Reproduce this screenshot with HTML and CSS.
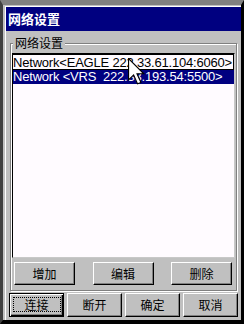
FILE: index.html
```html
<!DOCTYPE html>
<html>
<head>
<meta charset="utf-8">
<link rel="stylesheet" href="styles.css">
</head>
<body>
<div class="win">
  <div class="frame">
    <div class="title">网络设置</div>
    <div class="body">
      <div class="group">
        <div class="legend">网络设置</div>
        <div class="list">
          <div class="item focus">Network&lt;EAGLE 222.33.61.104:6060&gt;</div>
          <div class="item sel">Network &lt;VRS&nbsp; 222.33.193.54:5500&gt;</div>
        </div>
        <div class="row3">
          <div class="btn">增加</div>
          <div class="btn">编辑</div>
          <div class="btn">删除</div>
        </div>
      </div>
      <div class="row4">
        <div class="btn def">连接</div>
        <div class="btn">断开</div>
        <div class="btn">确定</div>
        <div class="btn">取消</div>
      </div>
    </div>
  </div>
  <svg class="cursor" width="18" height="27" viewBox="0 0 16 24">
    <path d="M0.5 0.5 L0.5 19.5 L5 15 L8.5 23 L11.5 21.8 L8 14 L14 14 Z" fill="#fff" stroke="#000" stroke-width="1"/>
  </svg>
</div>
</body>
</html>
```
FILE: styles.css
```css
* { box-sizing: border-box; }
html, body { margin: 0; padding: 0; }
body { width: 244px; height: 324px; overflow: hidden; background: #c0c0c0; }
.win {
  position: relative;
  width: 244px; height: 324px;
  background: #c0c0c0;
  border-top: 5px solid #808080;
  border-left: 3px solid #404040;
  border-right: 3px solid #000;
  border-bottom: 4px solid #000;
  padding: 1px 0 0 2px;
  display: flex; flex-direction: column;
}
.frame {
  flex: 1;
  display: flex; flex-direction: column;
  border-top: 1px solid #fff;
  border-left: 1px solid #fff;
}
.title {
  height: 24px;
  background: #000080;
  color: #fff;
  font: bold 13px/24px "Noto Sans CJK SC", sans-serif;
  padding-left: 2px;
}
.body {
  flex: 1;
  padding: 12px 4px 3px 4px;
  display: flex; flex-direction: column;
}
.group {
  position: relative;
  height: 248px;
  border: 1px solid #808080;
  box-shadow: 1px 1px 0 #fff, inset 1px 1px 0 #fff;
  padding: 9px 1px 5px 1px;
  display: flex; flex-direction: column;
}
.legend {
  position: absolute;
  left: 2px; top: -8px;
  padding: 0 2px;
  background: #c0c0c0;
  font: 12px/14px "Noto Sans CJK SC", sans-serif;
  color: #000;
}
.list {
  height: 205px;
  margin-bottom: 4px;
  background: #fffbff;
  border-top: 1px solid #000;
  border-left: 1px solid #000;
  border-right: 1px solid #c8c8c8;
  border-bottom: 1px solid #c8c8c8;
  font: 13px/14px "Liberation Sans", Arial, sans-serif;
  letter-spacing: -0.2px;
  color: #000;
}
.item { height: 14px; white-space: pre; }
.item.focus {
  height: 16px;
  padding-top: 1px;
  border: 1px solid #000;
  border-left: none;
}
.item.sel { background: #000080; color: #fff; }
.row3 {
  height: 23px;
  width: 218px;
  margin-left: 2px;
  display: flex; justify-content: space-between;
}
.row3 .btn { width: 61px; }
.row4 {
  height: 24px;
  margin: 2px -1px 0 -1px;
  display: flex; justify-content: space-between;
}
.row4 .btn { width: 55px; }
.btn {
  position: relative;
  height: 100%;
  background: #c0c0c0;
  border: 1px solid;
  border-color: #fff #000 #000 #fff;
  box-shadow: inset -1px -1px 0 #808080;
  display: flex; align-items: center; justify-content: center;
  font: 12px/14px "Noto Sans CJK SC", sans-serif;
  color: #000;
}
.btn.def {
  border-color: #000;
  box-shadow: inset 1px 1px 0 #fff, inset -1px -1px 0 #000, inset -2px -2px 0 #808080;
}
.btn.def::after {
  content: "";
  position: absolute;
  left: 3px; right: 2px; top: 3px; bottom: 4px;
  border: 1px dotted #000;
}
.cursor { position: absolute; left: 125px; top: 53px; }
```
